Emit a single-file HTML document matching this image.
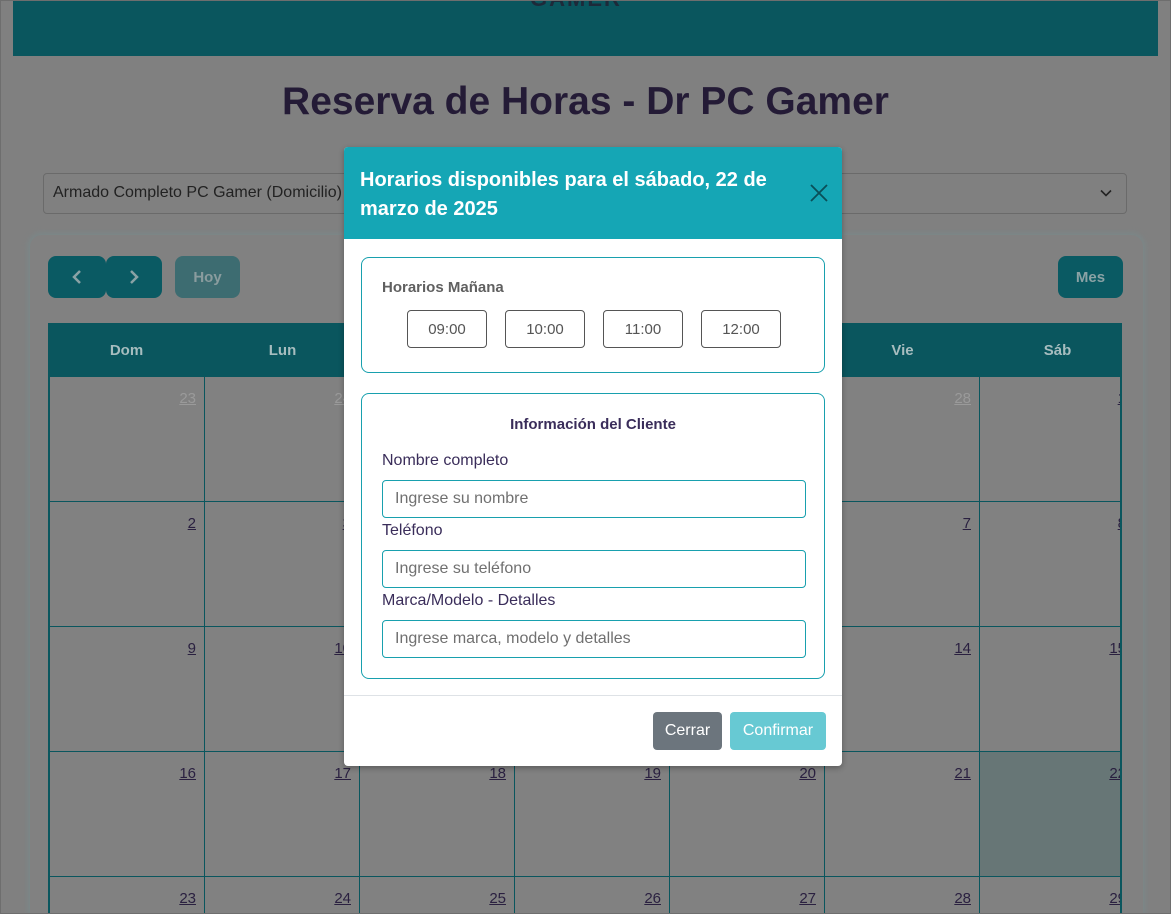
<!DOCTYPE html>
<html><head><meta charset="utf-8">
<style>
*{box-sizing:border-box;margin:0;padding:0}
html,body{width:1171px;height:914px;overflow:hidden}
body{background:#808080;font-family:"Liberation Sans",sans-serif;position:relative}
.a{position:absolute}
.frame{left:0;top:0;width:1171px;height:914px;border:1px solid #6e6e6e;pointer-events:none;z-index:50}
.hdr{left:13px;top:0;width:1145px;height:56px;background:#0a565e;overflow:hidden}
.title{left:0;width:1171px;top:80px;text-align:center;font-size:39px;font-weight:bold;color:#241b36}
.sel{left:43px;top:173px;width:1084px;height:41px;border:1px solid #6a6a6a;border-radius:4px;font-size:16px;color:#222;padding:10px 9px;white-space:nowrap;overflow:hidden}
.card{left:30px;top:235px;width:1113px;height:679px;border-radius:12px 12px 0 0;background:#818181;box-shadow:0 0 6px 2px #7a8889;overflow:hidden}
.btn{border-radius:8px;background:#0a5a63;color:#8aa2a5;font-weight:bold;font-size:15px;display:flex;align-items:center;justify-content:center}
.cal{left:18px;top:88px;width:1074px;height:591px;overflow:hidden}
.th{position:absolute;top:0;height:54px;background:#0a565e;color:#a7bdbf;font-weight:bold;font-size:15px;display:flex;align-items:center;justify-content:center}
.cell{position:absolute;border-right:1px solid #0a565e;border-bottom:1px solid #0a565e;text-align:right;padding:13px 8px 0 0;font-size:15px;color:#2a2040}
.cell span{text-decoration:underline}
.cell.o span{color:#9a9a9a}
.modal{left:344px;top:147px;width:498px;height:619px;background:#fff;border-radius:4px;overflow:hidden}
.mh{left:0;top:0;width:498px;height:92px;background:#15a6b5;color:#fff;font-weight:bold;font-size:20px;line-height:29px;padding:19px 16px}
.box{border:1px solid #18a0ae;border-radius:8px}
.tb{position:absolute;top:52px;width:80px;height:38px;border:1px solid #555;border-radius:4px;font-size:15px;color:#555;display:flex;align-items:center;justify-content:center}
.lbl{position:absolute;left:20px;font-size:16px;color:#3a2d5a}
.inp{position:absolute;left:20px;width:424px;height:38px;border:1px solid #18a0ae;border-radius:4px;font-size:16px;color:#707070;padding:9px 12px}
</style></head><body>
<div class="a frame"></div>
<div class="a hdr"><div class="a" style="left:517px;top:-14px;font-size:22px;font-weight:bold;color:#1d2a3a;letter-spacing:2px">GAMER</div></div>
<div class="a title">Reserva de Horas - Dr PC Gamer</div>
<div class="a sel">Armado Completo PC Gamer (Domicilio) - $50.000
<svg class="a" style="left:1056px;top:14px" width="12" height="10" viewBox="0 0 12 10"><path d="M1 2.5l5 5 5-5" fill="none" stroke="#222" stroke-width="1.6"/></svg></div>
<div class="a card">
 <div class="a btn" style="left:18px;top:21px;width:58px;height:42px"><svg width="12" height="16" viewBox="0 0 12 16"><path d="M9 2L3 8l6 6" fill="none" stroke="#8aa2a5" stroke-width="2.5"/></svg></div>
 <div class="a btn" style="left:76px;top:21px;width:56px;height:42px"><svg width="12" height="16" viewBox="0 0 12 16"><path d="M3 2l6 6-6 6" fill="none" stroke="#8aa2a5" stroke-width="2.5"/></svg></div>
 <div class="a btn" style="left:145px;top:21px;width:65px;height:42px;background:#3d6c71;color:#8a9c9e">Hoy</div>
 <div class="a btn" style="left:1028px;top:21px;width:65px;height:42px">Mes</div>
 <div class="a cal" id="cal"></div>
</div>
<div class="a modal" style="box-shadow:0 2px 6px rgba(0,0,0,.3)">
 <div class="a mh">Horarios disponibles para el sábado, 22 de<br>marzo de 2025</div>
 <svg class="a" style="left:466px;top:37px" width="18" height="18" viewBox="0 0 18 18"><path d="M1 1l16 16M17 1L1 17" stroke="#0a4f58" stroke-width="1.8"/></svg>
 <div class="a box" style="left:17px;top:110px;width:464px;height:116px">
  <div class="a" style="left:20px;top:21px;font-size:15px;font-weight:bold;color:#606060">Horarios Mañana</div>
  <div class="tb" style="left:45px">09:00</div><div class="tb" style="left:143px">10:00</div><div class="tb" style="left:241px">11:00</div><div class="tb" style="left:339px">12:00</div>
 </div>
 <div class="a box" style="left:17px;top:246px;width:464px;height:286px">
  <div class="a" style="left:0;width:462px;top:22px;text-align:center;font-size:15px;font-weight:bold;color:#3a2d5a">Información del Cliente</div>
  <div class="lbl" style="top:58px">Nombre completo</div>
  <div class="inp" style="top:86px">Ingrese su nombre</div>
  <div class="lbl" style="top:128px">Teléfono</div>
  <div class="inp" style="top:156px">Ingrese su teléfono</div>
  <div class="lbl" style="top:198px">Marca/Modelo - Detalles</div>
  <div class="inp" style="top:226px">Ingrese marca, modelo y detalles</div>
 </div>
 <div class="a" style="left:0;top:548px;width:498px;height:1px;background:#dee2e6"></div>
 <div class="a" style="left:309px;top:565px;width:69px;height:38px;background:#6c757d;border-radius:4px;color:#fff;font-size:16px;display:flex;align-items:center;justify-content:center">Cerrar</div>
 <div class="a" style="left:386px;top:565px;width:96px;height:38px;background:#67c9d3;border-radius:4px;color:#fff;font-size:16px;display:flex;align-items:center;justify-content:center">Confirmar</div>
</div>
<script>
var c=document.getElementById('cal'),h='',d=['Dom','Lun','Mar','Mié','Jue','Vie','Sáb'];
for(var i=0;i<7;i++)h+='<div class="th" style="left:'+(i==0?0:2+i*155)+'px;width:'+(i==0?157:155)+'px">'+d[i]+'</div>';
var n=[[23,24,25,26,27,28,1],[2,3,4,5,6,7,8],[9,10,11,12,13,14,15],[16,17,18,19,20,21,22],[23,24,25,26,27,28,29]];
for(var r=0;r<5;r++)for(var k=0;k<7;k++){var o=r==0&&k<6;var bg=(r==3&&k==6)?'background:#677676;':'';
h+='<div class="cell'+(o?' o':'')+'" style="'+bg+'left:'+(2+k*155)+'px;top:'+(54+r*125)+'px;width:155px;height:125px;'+(r==4?'border-bottom:none;':'')+'"><span>'+n[r][k]+'</span></div>';}
h+='<div class="a" style="left:0;top:54px;width:2px;height:600px;background:#0a565e"></div>';
h+='<div class="a" style="left:1072px;top:54px;width:2px;height:600px;background:#0a565e"></div>';
c.innerHTML=h;
</script>
</body></html>
